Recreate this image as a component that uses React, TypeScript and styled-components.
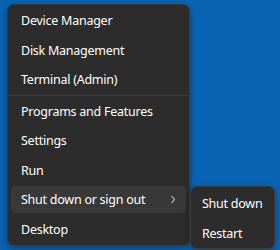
import React from "react";
import styled, { createGlobalStyle } from "styled-components";

const Global = createGlobalStyle`
  html, body { margin: 0; padding: 0; }
  body { background: #0a63b2; font-family: "Segoe UI", "Noto Sans", sans-serif; }
`;

const Desktop = styled.div`
  width: 280px;
  height: 250px;
  background: #0a63b2;
  padding: 4px 0 0 7px;
  box-sizing: border-box;
  overflow: hidden;
`;

const Menu = styled.div`
  width: 183px;
  box-sizing: border-box;
  background: #2c2c2c;
  border: 1px solid #3a3a3a;
  border-radius: 7px;
  padding: 1px 3px 1px;
  box-shadow: 0 2px 6px rgba(0, 0, 0, 0.35);
  display: flex;
  flex-direction: column;
`;

const Item = styled.div<{ $active?: boolean }>`
  position: relative;
  height: 27px;
  margin: 1px 0 1.5px;
  padding: 0 10px;
  border-radius: 4px;
  display: flex;
  align-items: center;
  justify-content: space-between;
  background: ${(p) => (p.$active ? "#383838" : "transparent")};
  color: #ffffff;
  font-size: 12.5px;
  letter-spacing: -0.25px;
`;

const Separator = styled.div`
  height: 1px;
  background: #3d3d3d;
  margin: 0 -3px 1px;
`;

const Chevron = styled.svg`
  width: 6px;
  height: 9px;
  margin-right: 0px;
`;

const SubMenu = styled.div`
  position: absolute;
  left: 179px;
  top: 0;
  width: 85px;
  box-sizing: border-box;
  background: #2c2c2c;
  border: 1px solid #3a3a3a;
  border-radius: 7px;
  padding: 2px 3px 0;
  box-shadow: 0 2px 6px rgba(0, 0, 0, 0.35);
  display: flex;
  flex-direction: column;
`;

const SubItem = styled.div`
  height: 27px;
  margin: 1px 0 1.5px;
  padding: 0 8px;
  display: flex;
  align-items: center;
  color: #ffffff;
  font-size: 12.5px;
  letter-spacing: -0.25px;
  white-space: nowrap;
`;

export default function App() {
  return (
    <>
      <Global />
      <Desktop>
        <Menu>
          <Item>Device Manager</Item>
          <Item>Disk Management</Item>
          <Item>Terminal (Admin)</Item>
          <Separator />
          <Item>Programs and Features</Item>
          <Item>Settings</Item>
          <Item>Run</Item>
          <Item $active>
            Shut down or sign out
            <Chevron viewBox="0 0 6 9">
              <path d="M1.5 1 L4.5 4.5 L1.5 8" fill="none" stroke="#c8c8c8" strokeWidth="1.1" />
            </Chevron>
            <SubMenu>
              <SubItem>Shut down</SubItem>
              <SubItem>Restart</SubItem>
            </SubMenu>
          </Item>
          <Item>Desktop</Item>
        </Menu>
      </Desktop>
    </>
  );
}
